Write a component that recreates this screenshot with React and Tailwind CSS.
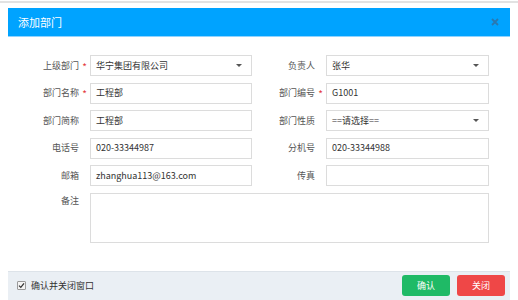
import React from 'react';

const LEFT = [
  { label: '上级部门', required: true, value: '华宁集团有限公司', select: true },
  { label: '部门名称', required: true, value: '工程部' },
  { label: '部门简称', value: '工程部' },
  { label: '电话号', value: '020-33344987' },
  { label: '邮箱', value: 'zhanghua113@163.com' },
];

const RIGHT = [
  { label: '负责人', value: '张华', select: true },
  { label: '部门编号', required: true, value: 'G1001' },
  { label: '部门性质', value: '==请选择==', select: true },
  { label: '分机号', value: '020-33344988' },
  { label: '传真', value: '' },
];

function Field({ value, select, width }) {
  return (
    <div className={`${width} h-[21px] border border-[#dcdcdc] bg-white flex items-center pl-[5px] pr-[9px] text-[#333]`}>
      <span className="flex-1 whitespace-nowrap leading-[12px]">{value}</span>
      {select && (
        <span className="w-0 h-0 border-l-[3px] border-r-[3px] border-t-[3px] border-l-transparent border-r-transparent border-t-[#555]" />
      )}
    </div>
  );
}

function Star({ show }) {
  return (
    <span className="w-[11px] flex justify-center text-[#e4393c] text-[10px] leading-[10px] pt-[2px]">
      {show ? '*' : ''}
    </span>
  );
}

export default function App() {
  return (
    <div className="w-[518px] h-[300px] bg-white overflow-hidden font-['Noto_Sans_CJK_SC','Noto_Sans',sans-serif] text-[9px]">
      <div className="mt-[1px] h-[2px] bg-[#e2e2e2]" />
      <div className="mx-[8px] mt-[5px] flex flex-col">
        {/* header */}
        <div className="h-[29px] bg-[#00a3ff] border-b border-[#8fd3ff] flex items-center pl-[10px] pr-[11px]">
          <span className="flex-1 text-white text-[11px] leading-[14px]">添加部门</span>
          <svg width="8" height="8" viewBox="0 0 8 8">
            <path d="M1 1L7 7M7 1L1 7" stroke="#2a78b0" strokeWidth="1.8" />
          </svg>
        </div>

        {/* body */}
        <div className="flex flex-col gap-[6.5px] pt-[18px] h-[234px] text-[#555]">
          {LEFT.map((l, i) => {
            const r = RIGHT[i];
            return (
              <div key={l.label} className="flex items-center">
                <span className="w-[71px] text-right whitespace-nowrap leading-[12px]">{l.label}</span>
                <Star show={l.required} />
                <Field value={l.value} select={l.select} width="w-[162px]" />
                <span className="w-[63px] text-right whitespace-nowrap leading-[12px]">{r.label}</span>
                <Star show={r.required} />
                <Field value={r.value} select={r.select} width="w-[163px]" />
              </div>
            );
          })}
          <div className="flex items-start">
            <span className="w-[71px] text-right leading-[12px] pt-[2px]">备注</span>
            <Star show={false} />
            <div className="w-[399px] h-[50px] border border-[#dcdcdc] bg-white" />
          </div>
        </div>

        {/* footer */}
        <div className="h-[30px] bg-[#eaeff4] border-t border-[#dde3e9] flex items-center pl-[9px] pr-[5px] pb-[2px]">
          <span className="w-[9px] h-[9px] border border-[#9a9a9a] rounded-[1px] bg-[#f4f4f4] flex items-center justify-center">
            <svg width="7" height="7" viewBox="0 0 7 7">
              <path d="M1 3.6L2.8 5.4L6 1.4" stroke="#333" strokeWidth="1.3" fill="none" />
            </svg>
          </span>
          <span className="ml-[5px] flex-1 text-[#333] leading-[12px]">确认并关闭窗口</span>
          <button className="w-[48px] h-[21px] rounded-[3px] bg-[#1fba66] text-white leading-[12px]">确认</button>
          <button className="ml-[7px] w-[48px] h-[21px] rounded-[3px] bg-[#ef4747] text-white leading-[12px]">关闭</button>
        </div>
      </div>
    </div>
  );
}
